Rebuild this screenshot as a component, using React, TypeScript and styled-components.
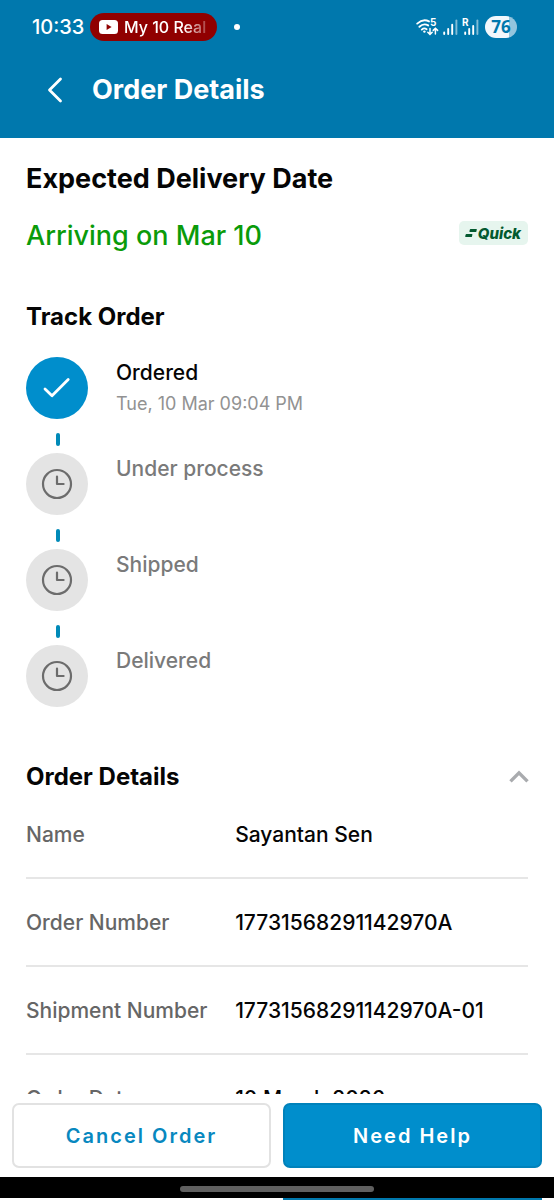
import React, { useState } from "react";
import styled, { createGlobalStyle } from "styled-components";

const GlobalStyle = createGlobalStyle`
  *, *::before, *::after { box-sizing: border-box; }
  body {
    margin: 0;
    background: #ffffff;
    color: #050505;
    font-family: Inter, "Liberation Sans", sans-serif;
  }
  h1, h2, p, ol, dl, dd { margin: 0; padding: 0; }
  button { font: inherit; cursor: pointer; }
`;

const Screen = styled.div`
  display: flex;
  flex-direction: column;
  height: 100vh;
`;

const Header = styled.header`
  background: #0078ad;
  color: #ffffff;
  padding-bottom: 12px;
`;

const StatusBar = styled.div`
  display: flex;
  align-items: center;
  height: 54px;
  padding: 0 37px 0 32px;

  svg { overflow: visible; }
`;

const Time = styled.time`
  width: 58px;
  font-size: 20px;
  font-weight: 500;
`;

const MediaChip = styled.div`
  display: flex;
  align-items: center;
  gap: 6px;
  width: 127px;
  height: 28px;
  padding: 0 9px;
  border-radius: 14px;
  background: #900000;
  font-size: 16px;
  font-weight: 500;
`;

const ChipText = styled.span`
  flex: 1;
  white-space: nowrap;
  mask-image: linear-gradient(to right, #000 72%, rgba(0, 0, 0, 0.2));
`;

const Dot = styled.span`
  width: 6px;
  height: 6px;
  margin-left: 17px;
  border-radius: 50%;
  background: #ffffff;
`;

const StatusIcons = styled.div`
  display: flex;
  align-items: center;
  gap: 4px;
  margin-left: auto;
`;

const Battery = styled.span`
  width: 32px;
  height: 22px;
  margin-left: 2px;
  border-radius: 11px;
  background: linear-gradient(to right, #f2f8fc 76%, #93c5de 76%);
  color: #0078ad;
  font-family: "Open Sans", sans-serif;
  font-size: 17px;
  font-weight: 700;
  line-height: 22px;
  text-align: center;
`;

const AppBar = styled.div`
  display: flex;
  align-items: center;
  gap: 18px;
  height: 72px;
  padding: 0 36px;
`;

const IconButton = styled.button`
  display: flex;
  align-items: center;
  justify-content: center;
  width: 38px;
  height: 38px;
  padding: 0;
  border: 0;
  background: none;
  color: inherit;
`;

const PageTitle = styled.h1`
  font-size: 27px;
  line-height: 32px;
  font-weight: 700;
`;

const Content = styled.main`
  flex: 1;
  min-height: 0;
  overflow-y: auto;
  scrollbar-width: none;
  padding: 25px 26px 0;
`;

const SectionTitle = styled.h2<{ $large?: boolean }>`
  font-size: ${(p) => (p.$large ? 27 : 24)}px;
  line-height: ${(p) => (p.$large ? 32 : 28)}px;
  font-weight: 700;
`;

const ArrivalRow = styled.div`
  display: flex;
  align-items: center;
  justify-content: space-between;
  margin: 25px 0 51px;
`;

const Arrival = styled.p`
  color: #0a9b0a;
  font-size: 27px;
  line-height: 32px;
  font-weight: 500;
`;

const QuickBadge = styled.span`
  display: flex;
  align-items: center;
  gap: 1px;
  height: 24px;
  padding: 0 7px 0 6px;
  margin-bottom: 6px;
  border-radius: 5px;
  background: #e6f5ee;
  color: #03592f;
  font-size: 15px;
  font-style: italic;
  font-weight: 800;
`;

const Steps = styled.ol`
  margin: 26px 0 56px;
  list-style: none;
`;

const Step = styled.li`
  display: flex;
  gap: 28px;
`;

const Rail = styled.div`
  display: flex;
  flex-direction: column;
  align-items: center;
  width: 62px;
`;

const Marker = styled.span<{ $done: boolean }>`
  display: flex;
  align-items: center;
  justify-content: center;
  width: 62px;
  height: 62px;
  border-radius: 50%;
  background: ${(p) => (p.$done ? "#008ecc" : "#e4e4e4")};
  color: ${(p) => (p.$done ? "#ffffff" : "#6c6c6c")};
`;

const Dash = styled.span`
  width: 4px;
  height: 13px;
  margin: 14px 0 7px 2px;
  border-radius: 2px;
  background: #008ab8;
`;

const StepName = styled.p<{ $done: boolean }>`
  color: ${(p) => (p.$done ? "#050505" : "#7a7a7a")};
  font-size: 21px;
  line-height: 32px;
  font-weight: 500;
`;

const StepTime = styled.p`
  color: #929292;
  font-size: 18px;
  line-height: 30px;
  font-weight: 400;
`;

const DetailsHeader = styled.div`
  display: flex;
  align-items: center;
  justify-content: space-between;
  height: 28px;
  color: #a9abae;

  ${SectionTitle} { color: #050505; }
  ${IconButton} { margin-right: -10px; }
`;

const DetailRow = styled.div`
  display: grid;
  grid-template-columns: 5fr 7fr;
  align-items: center;
  height: 88px;
  border-bottom: 2px solid #e6e6e6;
  font-size: 21px;
  font-weight: 500;
  white-space: nowrap;

  dt { color: #666666; }
`;

const Actions = styled.footer`
  display: grid;
  grid-template-columns: 1fr 1fr;
  gap: 12px;
  padding: 9px 12px;
  background: #ffffff;
`;

const ActionButton = styled.button<{ $primary?: boolean }>`
  height: 65px;
  border: 2px solid ${(p) => (p.$primary ? "#0082bb" : "#e2e2e2")};
  border-radius: 7px;
  background: ${(p) => (p.$primary ? "#008ecc" : "#ffffff")};
  color: ${(p) => (p.$primary ? "#ffffff" : "#0888bf")};
  font-size: 20px;
  font-weight: 600;
  letter-spacing: 2px;
`;

const HomeBar = styled.div`
  display: flex;
  align-items: center;
  justify-content: center;
  height: 21px;
  padding-top: 3px;
  background: #000000;

  &::before {
    content: "";
    width: 35%;
    height: 6px;
    border-radius: 3px;
    background: #606060;
  }
`;

const BottomEdge = styled.div`
  display: grid;
  grid-template-columns: 1fr 1fr;
  gap: 12px;
  height: 2px;
  padding: 0 12px;

  &::after {
    content: "";
    grid-column: 2;
    background: #0078ad;
  }
`;

const WifiIcon = () => (
  <svg width="23" height="18" viewBox="0 0 23 18" fill="none" stroke="#fff" strokeWidth="1.9" strokeLinecap="round">
    <path d="M1.2 5.6Q7 0.4 13 3.4M3.4 8.8Q7.6 4.8 12.2 7.4M5.8 11.6Q8.2 9.4 10.6 11.2" />
    <circle cx="8.4" cy="13.6" r="1.2" fill="#fff" stroke="none" />
    <path d="M14 10.5v5.6M11.8 14.2l2.2 2.2 2.2-2.2M19.4 16V10.4M17.2 12.4l2.2-2.2 2.2 2.2" strokeWidth="1.5" />
    <text x="14" y="8.4" fill="#fff" stroke="none" fontSize="10" fontWeight="700">5</text>
  </svg>
);

const SignalIcon = ({ roaming }: { roaming?: boolean }) => (
  <svg width={roaming ? 17 : 15} height="18" viewBox={roaming ? "-2 0 17 18" : "0 0 15 18"} stroke="#fff" strokeWidth="1.9" strokeLinecap="round">
    <path d={roaming ? "M1.2 14.5v1.5M5.2 11v5M9.2 8v8" : "M1.2 14.5v1.5M5.2 11v5M9.2 6.8v9.2"} />
    <path d="M13.4 2.5v13.5" opacity=".5" />
    {roaming && <text x="-2" y="8" fill="#fff" stroke="none" fontSize="10" fontWeight="700">R</text>}
  </svg>
);

const YouTubeIcon = () => (
  <svg width="19" height="14" viewBox="0 0 19 14">
    <rect width="19" height="14" rx="3.5" fill="#fff" />
    <path d="M7.6 4v6l5-3z" fill="#900000" />
  </svg>
);

const BackIcon = () => (
  <svg width="16" height="26" viewBox="0 0 16 26" fill="none" stroke="currentColor" strokeWidth="2.8" strokeLinecap="round" strokeLinejoin="round">
    <path d="M13.5 2L2.5 13l11 11" />
  </svg>
);

const CheckIcon = () => (
  <svg width="28" height="22" viewBox="0 0 28 22" fill="none" stroke="currentColor" strokeWidth="2.8" strokeLinecap="round" strokeLinejoin="round">
    <path d="M2 12L9 18.8 25.2 2.4" />
  </svg>
);

const ClockIcon = () => (
  <svg width="32" height="32" viewBox="0 0 32 32" fill="none" stroke="currentColor" strokeWidth="2.2" strokeLinecap="round" strokeLinejoin="round">
    <circle cx="16" cy="16" r="14" />
    <path d="M16 8.6V16h6.6" />
  </svg>
);

const ChevronIcon = ({ open }: { open: boolean }) => (
  <svg width="20" height="14" viewBox="0 0 20 14" fill="none" stroke="currentColor" strokeWidth="3.4">
    <path d={open ? "M1.5 11.4L10 2.8l8.5 8.6" : "M1.5 2L10 10.6 18.5 2"} />
  </svg>
);

const SpeedLines = () => (
  <svg width="12" height="10" viewBox="0 0 12 10" fill="currentColor">
    <path d="M5.6 1h5.8q.6 0 .4.6l-.4 1.8q-.2.6-.8.6H5q-.8 0-.6-.7l.4-1.6Q5 1 5.6 1zM1.4 6H7q.6 0 .4.6L7 8.4q-.2.6-.8.6H.8Q0 9 .2 8.3l.4-1.6Q.8 6 1.4 6z" />
  </svg>
);

const steps = [
  { name: "Ordered", time: "Tue, 10 Mar 09:04 PM", done: true },
  { name: "Under process", done: false },
  { name: "Shipped", done: false },
  { name: "Delivered", done: false },
];

const details = [
  ["Name", "Sayantan Sen"],
  ["Order Number", "17731568291142970A"],
  ["Shipment Number", "17731568291142970A-01"],
  ["Order Date", "10 March 2026"],
];

export default function App() {
  const [open, setOpen] = useState(true);

  return (
    <Screen>
      <GlobalStyle />
      <Header>
        <StatusBar>
          <Time>10:33</Time>
          <MediaChip>
            <YouTubeIcon />
            <ChipText>My 10 Real</ChipText>
          </MediaChip>
          <Dot />
          <StatusIcons>
            <WifiIcon />
            <SignalIcon />
            <SignalIcon roaming />
            <Battery>76</Battery>
          </StatusIcons>
        </StatusBar>
        <AppBar>
          <IconButton type="button" aria-label="Back">
            <BackIcon />
          </IconButton>
          <PageTitle>Order Details</PageTitle>
        </AppBar>
      </Header>

      <Content>
        <SectionTitle $large>Expected Delivery Date</SectionTitle>
        <ArrivalRow>
          <Arrival>Arriving on Mar 10</Arrival>
          <QuickBadge>
            <SpeedLines />
            Quick
          </QuickBadge>
        </ArrivalRow>

        <SectionTitle>Track Order</SectionTitle>
        <Steps>
          {steps.map((step, i) => (
            <Step key={step.name}>
              <Rail>
                <Marker $done={step.done}>{step.done ? <CheckIcon /> : <ClockIcon />}</Marker>
                {i < steps.length - 1 && <Dash />}
              </Rail>
              <div>
                <StepName $done={step.done}>{step.name}</StepName>
                {step.time && <StepTime>{step.time}</StepTime>}
              </div>
            </Step>
          ))}
        </Steps>

        <DetailsHeader>
          <SectionTitle>Order Details</SectionTitle>
          <IconButton
            type="button"
            aria-label="Toggle order details"
            aria-expanded={open}
            onClick={() => setOpen(!open)}
          >
            <ChevronIcon open={open} />
          </IconButton>
        </DetailsHeader>
        {open && (
          <dl>
            {details.map(([label, value]) => (
              <DetailRow key={label}>
                <dt>{label}</dt>
                <dd>{value}</dd>
              </DetailRow>
            ))}
          </dl>
        )}
      </Content>

      <Actions>
        <ActionButton type="button">Cancel Order</ActionButton>
        <ActionButton type="button" $primary>
          Need Help
        </ActionButton>
      </Actions>
      <HomeBar />
      <BottomEdge />
    </Screen>
  );
}
